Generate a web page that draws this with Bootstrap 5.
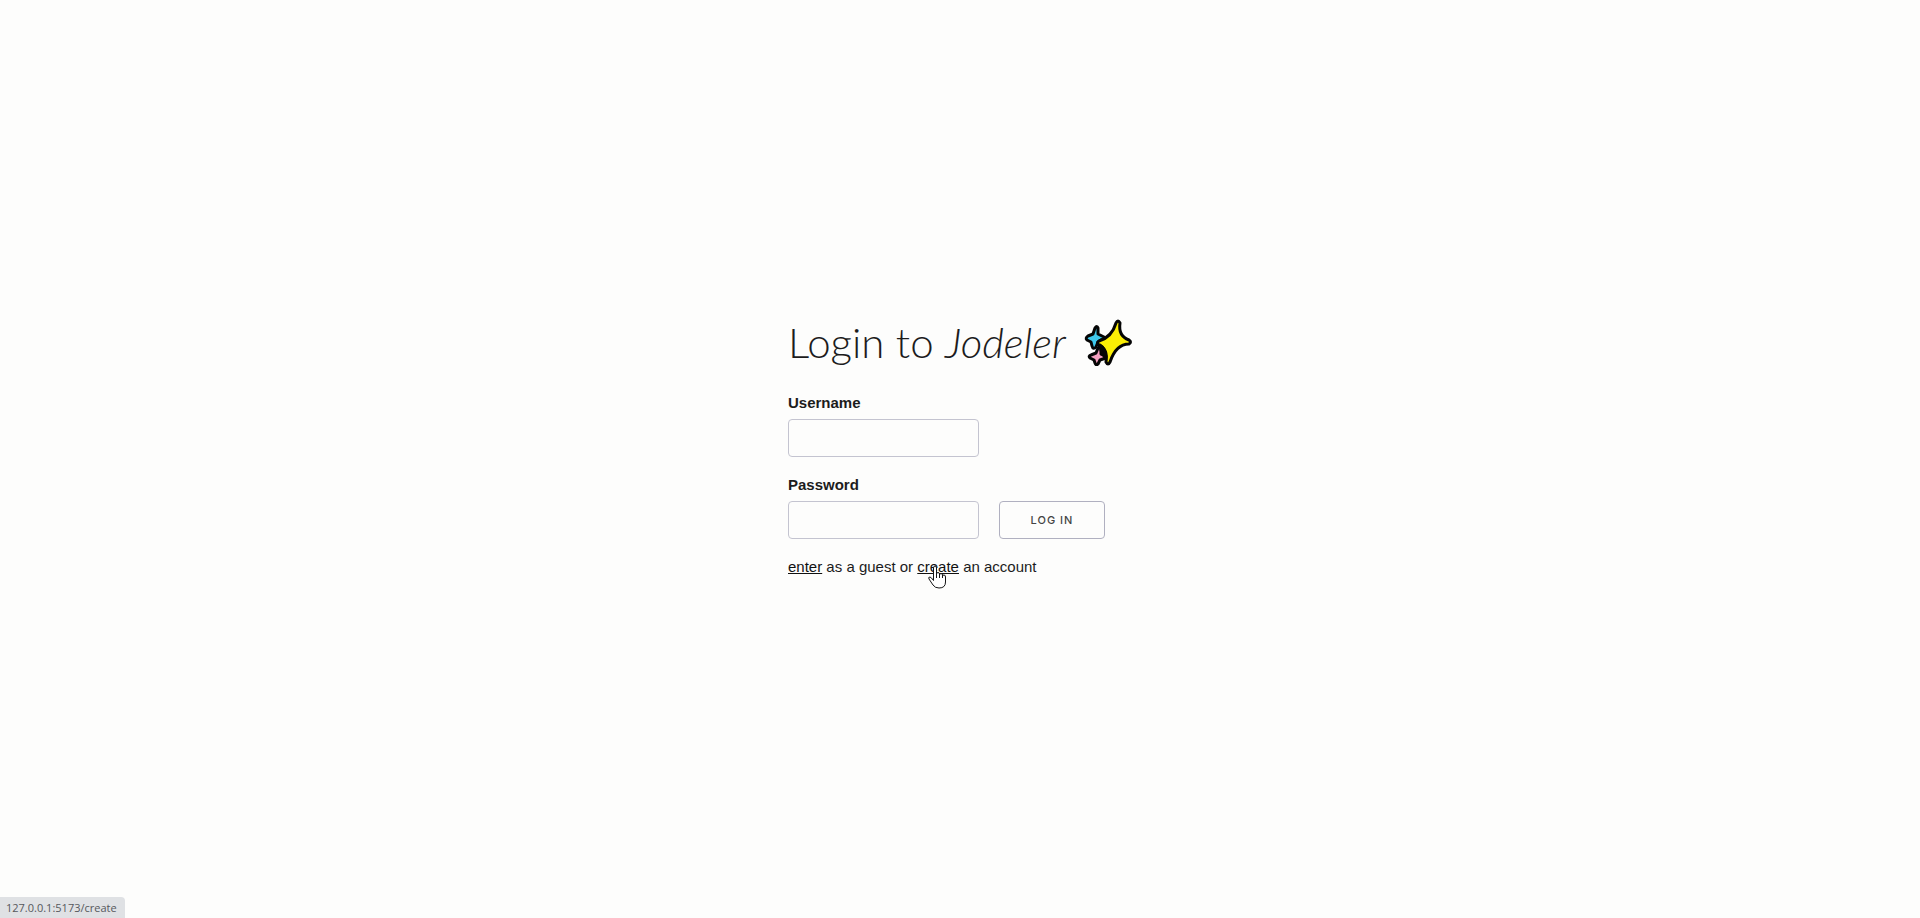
<!DOCTYPE html>
<html lang="en">
<head>
<meta charset="utf-8">
<meta name="viewport" content="width=device-width, initial-scale=1">
<title>Jodeler</title>
<link href="https://cdn.jsdelivr.net/npm/bootstrap@5.3.0/dist/css/bootstrap.min.css" rel="stylesheet">
<style>
body { background: #fdfdfc; color: #1c1c1c; font-family: "Liberation Sans", Arial, sans-serif; font-size: 15px; line-height: 24px; }
.page { padding-bottom: 22px; }
.title { font-family: Lato, "Liberation Sans", sans-serif; font-size: 42px; font-weight: 300; line-height: 50px; }
.login { width: 344px; }
.form-label { font-weight: 700; line-height: 24px; margin-bottom: 4px; }
.field { width: 191px; height: 38px; background: transparent; border: 1px solid #c4c4d0; border-radius: 4px; }
.field-row { gap: 20px; }
.login-btn { width: 106px; height: 38px; padding: 0; border: 1px solid #b0b0c0; border-radius: 4px; color: #444; font: 500 11px/36px Inter, sans-serif; letter-spacing: 1px; }
.hint a { color: #111; }
.pointer { left: 50%; top: 7px; margin-left: -10px; }
.status { background: #dfe1e4; color: #56585c; font: 11px/21px "Open Sans", sans-serif; padding: 0 8px 0 6px; border-radius: 0 4px 0 0; }
</style>
</head>
<body>
<main class="page min-vh-100 d-flex align-items-center justify-content-center">
  <form class="login">
    <div class="d-flex align-items-center justify-content-between mb-4">
      <h1 class="title text-nowrap mb-0">Login to <em>Jodeler</em></h1>
      <svg class="flex-shrink-0" width="48" height="48" viewBox="0 0 48 48" stroke="#050505" stroke-width="3" stroke-linejoin="round" aria-hidden="true">
        <path d="M11 10Q13 7 14 10L14 16L20 19Q21 21 17 22L14 24L12 29Q9 32 8 28L7 24L3 22Q1 20 4 18L9 16Z" fill="#3fc8ec"/>
        <path d="M14 30Q17 27 17 31L17 36L22 38Q22 40 19 41L16 42L14 46Q12 48 11 45L10 42L6 40Q4 38 7 37L12 35Z" fill="#f4a0c0"/>
        <path d="M15 26Q26 28 23 40Q17 38 15 26Z" fill="#050505" stroke="none"/>
        <path d="M32 5Q34 1 36 5Q34 18 45 22Q48 24 45 26Q32 26 26 44Q24 48 22 44Q24 31 15 27Q12 25 15 23Q28 19 32 5Z" fill="#fbee05"/>
        <path d="M16 27Q21 30 22 39Q17 37 16 27Z" fill="#050505"/>
      </svg>
    </div>
    <div class="mb-3">
      <label class="form-label d-block" for="username">Username</label>
      <input class="form-control field" id="username" type="text">
    </div>
    <label class="form-label d-block" for="password">Password</label>
    <div class="field-row d-flex mb-3">
      <input class="form-control field" id="password" type="password">
      <button class="btn login-btn" type="submit">LOG IN</button>
    </div>
    <p class="hint mb-0"><a href="#guest">enter</a> as a guest or <span class="position-relative"><a href="#create">create</a><svg class="pointer position-absolute" width="18" height="24" viewBox="0 0 18 24" fill="#fff" stroke="#151515" stroke-linejoin="round" aria-hidden="true"><path d="M5.500 15.500V3Q5.500 1 7 1T8.500 3V9Q8.500 7.500 10 7.500T11.500 9V10Q11.500 8.500 13 8.500T14.500 10V11Q14.500 10 16 10T17.500 12V17Q17.500 23 11 23Q7 23 5 20L1 14Q0 12 2 12Q3 12 5.500 15.500M8.500 9V13M11.500 9V13M14.500 10V13"/></svg></span> an account</p>
  </form>
</main>
<div class="status position-fixed bottom-0 start-0">127.0.0.1:5173/create</div>
<script src="https://cdn.jsdelivr.net/npm/bootstrap@5.3.0/dist/js/bootstrap.bundle.min.js"></script>
</body>
</html>
